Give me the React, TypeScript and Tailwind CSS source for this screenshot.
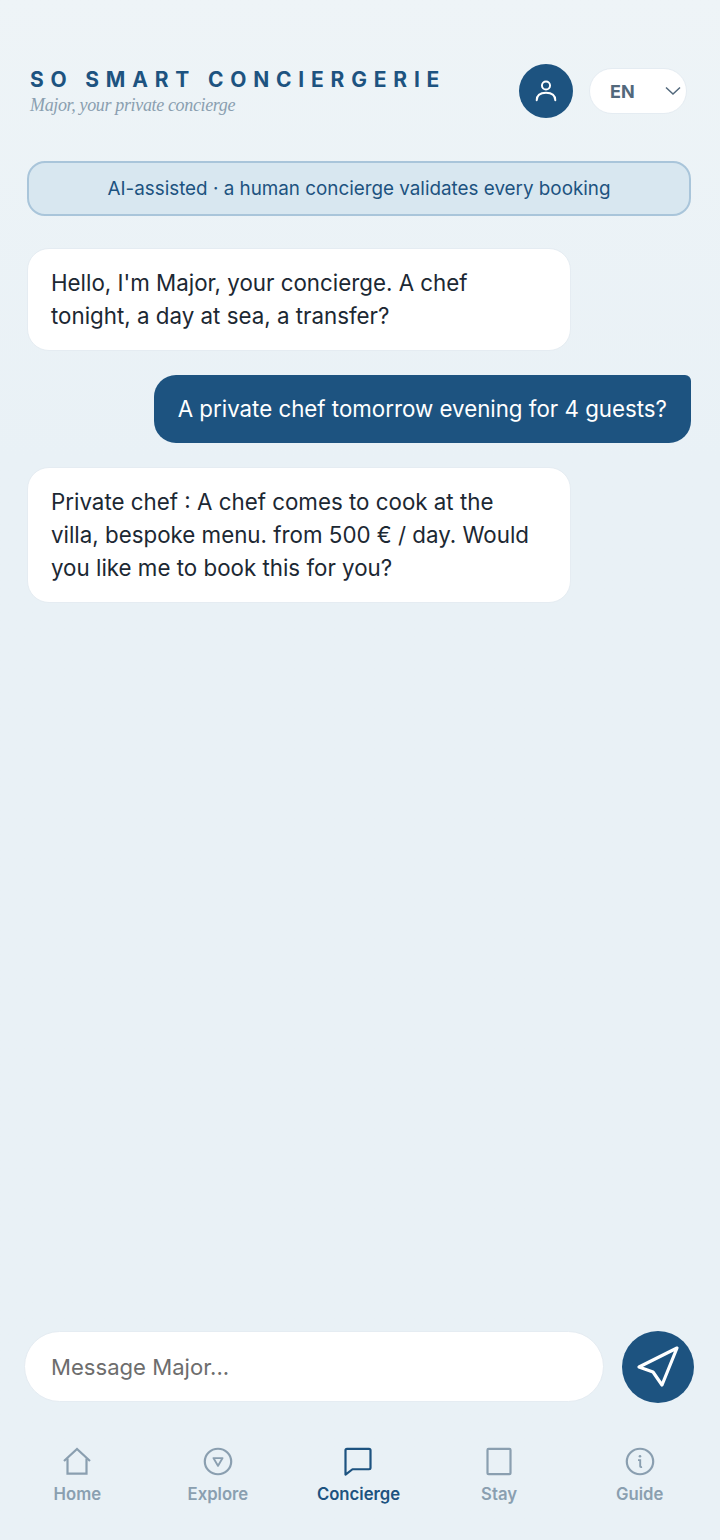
import React from 'react';

const tabs = [
  { label: 'Home', icon: 'home' },
  { label: 'Explore', icon: 'explore' },
  { label: 'Concierge', icon: 'chat' },
  { label: 'Stay', icon: 'stay' },
  { label: 'Guide', icon: 'guide' },
];

function TabIcon({ name }: { name: string }) {
  const size = { width: 32, height: 31, viewBox: '0 0 32 32', preserveAspectRatio: 'none' };
  if (name === 'home') {
    return (
      <svg {...size} fill="none" stroke="currentColor" strokeWidth="2.2" strokeLinejoin="miter">
        <path d="M3 15.500 16 3l13 12.500" />
        <path d="M6.500 13v15.500h19V13" />
      </svg>
    );
  }
  if (name === 'explore') {
    return (
      <svg {...size} fill="none" stroke="currentColor" strokeWidth="2.2">
        <circle cx="16" cy="16" r="13.2" />
        <path d="M11.500 12.500h9L16 20.500z" strokeWidth="2" strokeLinejoin="round" />
      </svg>
    );
  }
  if (name === 'chat') {
    return (
      <svg {...size} fill="none" stroke="currentColor" strokeWidth="2.2" strokeLinejoin="round">
        <path d="M5 3h22a1.500 1.500 0 0 1 1.500 1.500v18a1.500 1.500 0 0 1-1.500 1.500H10.500L3.500 29.500V4.500A1.500 1.500 0 0 1 5 3z" />
      </svg>
    );
  }
  if (name === 'stay') {
    return (
      <svg {...size} fill="none" stroke="currentColor" strokeWidth="2.2">
        <rect x="4.500" y="3" width="23" height="26" rx="1" />
      </svg>
    );
  }
  return (
    <svg {...size} fill="none" stroke="currentColor" strokeWidth="2.2">
      <circle cx="16" cy="16" r="13.2" />
      <circle cx="16" cy="10.500" r="1.300" fill="currentColor" stroke="none" />
      <path d="M14 14.500h2.200v6.500c0 .6.5 1 1.800.6" strokeWidth="1.900" />
    </svg>
  );
}

export default function App() {
  return (
    <div className="flex h-[1540px] w-[720px] flex-col overflow-hidden bg-gradient-to-b from-[#eef4f7] to-[#e9f1f6] to-30% font-['Inter',sans-serif]">
      {/* Header */}
      <div className="flex items-center justify-between pl-[30px] pr-[33px] pt-[64px]">
        <div>
          <div className="text-[21px] font-bold leading-[30px] tracking-[6.8px] text-[#1d5380]">SO SMART CONCIERGERIE</div>
          <div className="mt-[-2px] font-['Liberation_Serif',serif] text-[18px] italic leading-[24px] tracking-[-0.35px] text-[#8a9fb0]">Major, your private concierge</div>
        </div>
        <div className="flex items-center gap-4">
          <div className="flex h-[54px] w-[54px] items-center justify-center rounded-full bg-[#1d5380]">
            <svg width="22" height="22" viewBox="0 0 26 26" fill="none" stroke="white" strokeWidth="2.300">
              <circle cx="13" cy="6.500" r="4.800" />
              <path d="M2 24c0-5.500 3-9 11-9s11 3.500 11 9" strokeLinecap="round" />
            </svg>
          </div>
          <div className="flex h-[46px] w-[98px] items-center rounded-full border border-[#e5ecf2] bg-white pl-5 pr-[5px]">
            <span className="text-[18px] font-bold text-[#52687c]">EN</span>
            <svg className="ml-auto mr-[-1px]" width="18" height="18" viewBox="0 0 18 18" fill="none" stroke="#52687c" strokeWidth="1.500">
              <path d="M2 5.500 9 12l7-6.500" />
            </svg>
          </div>
        </div>
      </div>

      {/* AI banner */}
      <div className="ml-[27px] mr-[29px] mt-[43px] flex h-[55px] items-center justify-center rounded-[18px] border-2 border-[#a9c5da] bg-[#d8e7f0] pt-[2px] text-[18.840px] text-[#1d5380]">
        AI-assisted · a human concierge validates every booking
      </div>

      {/* Messages */}
      <div className="flex flex-1 flex-col gap-6 pl-[27px] pr-[29px] pt-8">
        <div className="w-[544px] rounded-[22px] border border-[#e5ecf2] bg-white px-[23px] pb-[18px] pt-[17px] text-[22.340px] leading-[33px] text-[#1c2833]">
          Hello, I'm Major, your concierge. A chef tonight, a day at sea, a transfer?
        </div>
        <div className="self-end whitespace-nowrap rounded-[22px] rounded-tr-[6px] bg-[#1d5380] px-6 py-[17px] text-[22.300px] leading-[34px] text-white">
          A private chef tomorrow evening for 4 guests?
        </div>
        <div className="w-[544px] rounded-[22px] border border-[#e5ecf2] bg-white px-[23px] pb-[18px] pt-[17px] text-[22.340px] leading-[33px] text-[#1c2833]">
          Private chef : A chef comes to cook at the villa, bespoke menu. from 500 € / day. Would you like me to book this for you?
        </div>
      </div>

      {/* Input */}
      <div className="flex items-start gap-[18px] pl-6 pr-[26px]">
        <div className="flex h-[71px] w-[580px] items-center rounded-full border border-[#e5ecf2] bg-white pl-[26px] pt-[3px] text-[22.100px] text-[#6d6d6d]">
          Message Major...
        </div>
        <div className="flex h-[72px] w-[72px] items-center justify-center rounded-full bg-[#1d5380]">
          <svg width="44" height="44" viewBox="0 0 44 44" fill="none" stroke="white" strokeWidth="3.200" strokeLinejoin="round">
            <path d="M41 3 3 22l14 5 9 13z" />
          </svg>
        </div>
      </div>

      {/* Bottom tabs */}
      <div className="mt-[42px] grid h-[95px] grid-cols-5 pl-[7px] pr-[10px] pt-[1px]">
        {tabs.map((tab) => (
          <div key={tab.label} className={`flex flex-col items-center ${tab.label === 'Concierge' ? 'text-[#1d5380]' : 'text-[#8a9fb0]'}`}>
            <TabIcon name={tab.icon} />
            <span className="mt-[5px] text-[16.700px] font-semibold leading-6">{tab.label}</span>
          </div>
        ))}
      </div>
    </div>
  );
}
